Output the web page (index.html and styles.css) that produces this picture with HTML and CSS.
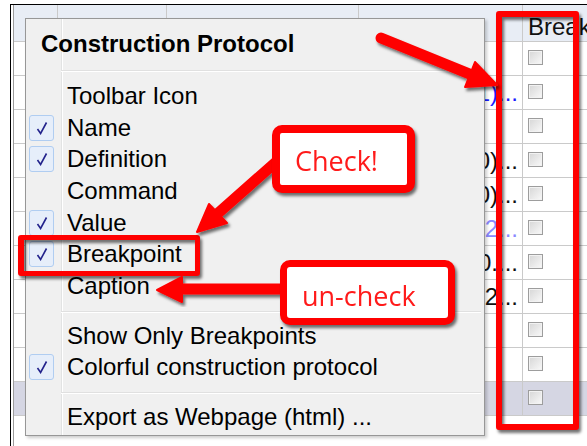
FILE: index.html
```html
<!DOCTYPE html>
<html lang="en">
  <head>
    <meta charset="UTF-8" />
    <title>Construction Protocol</title>
    <link rel="stylesheet" href="styles.css">
  </head>
  <body>
    <div class="shot">
      <!-- table behind the popup -->
      <div class="frame">
        <div class="table">
          <div class="row head">
            <div class="cell"></div>
            <div class="cell">Name</div>
            <div class="cell">Definition</div>
            <div class="cell">Value</div>
            <div class="cell">Breakpoint</div>
          </div>
          <div class="row">
            <div class="cell"></div><div class="cell"></div><div class="cell"></div>
            <div class="cell value"></div>
            <div class="cell"><span class="box"></span></div>
          </div>
          <div class="row">
            <div class="cell"></div><div class="cell"></div><div class="cell"></div>
            <div class="cell value blue">(1, 1)...</div>
            <div class="cell"><span class="box"></span></div>
          </div>
          <div class="row">
            <div class="cell"></div><div class="cell"></div><div class="cell"></div>
            <div class="cell value"></div>
            <div class="cell"><span class="box"></span></div>
          </div>
          <div class="row">
            <div class="cell"></div><div class="cell"></div><div class="cell"></div>
            <div class="cell value">(4, 0)...</div>
            <div class="cell"><span class="box"></span></div>
          </div>
          <div class="row">
            <div class="cell"></div><div class="cell"></div><div class="cell"></div>
            <div class="cell value">(2, 0)...</div>
            <div class="cell"><span class="box"></span></div>
          </div>
          <div class="row">
            <div class="cell"></div><div class="cell"></div><div class="cell"></div>
            <div class="cell value light">x + 2...</div>
            <div class="cell"><span class="box"></span></div>
          </div>
          <div class="row">
            <div class="cell"></div><div class="cell"></div><div class="cell"></div>
            <div class="cell value">y = 0....</div>
            <div class="cell"><span class="box"></span></div>
          </div>
          <div class="row">
            <div class="cell"></div><div class="cell"></div><div class="cell"></div>
            <div class="cell value">a = 2...</div>
            <div class="cell"><span class="box"></span></div>
          </div>
          <div class="row">
            <div class="cell"></div><div class="cell"></div><div class="cell"></div>
            <div class="cell value"></div>
            <div class="cell"><span class="box"></span></div>
          </div>
          <div class="row">
            <div class="cell"></div><div class="cell"></div><div class="cell"></div>
            <div class="cell value"></div>
            <div class="cell"><span class="box"></span></div>
          </div>
          <div class="row selected">
            <div class="cell"></div><div class="cell"></div><div class="cell"></div>
            <div class="cell value"></div>
            <div class="cell"><span class="box"></span></div>
          </div>
        </div>
      </div>

      <!-- popup menu -->
      <div class="menu">
        <div class="menu-title">Construction Protocol</div>
        <div class="menu-sep first"></div>
        <div class="item"><span class="tick"></span>Toolbar Icon</div>
        <div class="item"><span class="tick on"><svg width="12" height="14" viewBox="0 0 12 14"><path d="M1.5 8 L4.6 12.5 L10.5 1.5" /></svg></span>Name</div>
        <div class="item"><span class="tick on"><svg width="12" height="14" viewBox="0 0 12 14"><path d="M1.5 8 L4.6 12.5 L10.5 1.5" /></svg></span>Definition</div>
        <div class="item"><span class="tick"></span>Command</div>
        <div class="item"><span class="tick on"><svg width="12" height="14" viewBox="0 0 12 14"><path d="M1.5 8 L4.6 12.5 L10.5 1.5" /></svg></span>Value</div>
        <div class="item"><span class="tick on"><svg width="12" height="14" viewBox="0 0 12 14"><path d="M1.5 8 L4.6 12.5 L10.5 1.5" /></svg></span>Breakpoint</div>
        <div class="item"><span class="tick"></span>Caption</div>
        <div class="menu-sep"></div>
        <div class="item"><span class="tick"></span>Show Only Breakpoints</div>
        <div class="item"><span class="tick on"><svg width="12" height="14" viewBox="0 0 12 14"><path d="M1.5 8 L4.6 12.5 L10.5 1.5" /></svg></span>Colorful construction protocol</div>
        <div class="menu-sep"></div>
        <div class="item"><span class="tick"></span>Export as Webpage (html) ...</div>
      </div>

      <!-- annotations -->
      <div class="mark column-mark"></div>
      <div class="mark item-mark"></div>

      <svg class="arrows" width="587" height="446" viewBox="0 0 587 446">
        <defs>
          <filter id="shade" x="-20%" y="-20%" width="140%" height="140%">
            <feDropShadow dx="2" dy="3" stdDeviation="1.5" flood-color="#000" flood-opacity="0.55" />
          </filter>
        </defs>
        <g filter="url(#shade)">
          <line x1="381" y1="38" x2="472" y2="75" />
          <polygon points="497,85 465,87 475,62" />
        </g>
        <g filter="url(#shade)">
          <line x1="276" y1="162" x2="216" y2="215" />
          <polygon points="197,232 209,204 227,223" />
        </g>
        <g filter="url(#shade)">
          <line x1="292" y1="289" x2="178" y2="289" />
          <polygon points="157,290 182,277 182,302" />
        </g>
      </svg>

      <div class="callout check-note">Check!</div>
      <div class="callout uncheck-note">un-check</div>
    </div>
  </body>
</html>
```

FILE: styles.css
```css
body {
  margin: 0;
  background: #fff;
  font-family: "Liberation Sans", Arial, sans-serif;
}

.shot {
  position: relative;
  width: 587px;
  height: 446px;
  overflow: hidden;
  background: #fff;
}

/* table underneath */
.frame {
  margin: 4px 0 0 10px;
  height: 442px;
  box-sizing: border-box;
  border-left: 1px solid #000;
  border-top: 1px solid #000;
  padding-left: 2px;
}

.table {
  height: 100%;
  border-left: 1px solid #9c9c9c;
}

.row {
  display: grid;
  grid-template-columns: 44px 109px 192px 164px 80px;
  height: 34px;
}

.row.head {
  height: 37px;
  background: #e8edf5;
}

.row.selected {
  background: #d5d6e3;
}

.cell {
  box-sizing: border-box;
  border-right: 1px solid #cacaca;
  border-bottom: 1px solid #cacaca;
  padding: 0 4px;
  font-size: 24px;
  line-height: 33px;
  white-space: nowrap;
  overflow: hidden;
  color: #111;
}

.head .cell {
  padding-top: 5px;
  padding-left: 5px;
}

.value {
  text-align: right;
}

.value.blue {
  color: #1a1aff;
}

.value.light {
  color: #8a8aff;
}

.box {
  display: block;
  width: 15px;
  height: 15px;
  box-sizing: border-box;
  margin: 8px 0 0 1px;
  border: 1px solid #9d9d9d;
  background: linear-gradient(135deg, #d6d6d6, #f9f9f9);
  box-shadow: inset 0 0 0 1px #f2f2f2;
}

/* popup menu */
.menu {
  position: absolute;
  left: 25px;
  top: 18px;
  width: 460px;
  height: 418px;
  box-sizing: border-box;
  padding-top: 9px;
  border: 1px solid #979797;
  background: linear-gradient(to right, #f0f0f0 35px, #e2e3e3 35px, #e2e3e3 36px, #fff 36px, #fff 37px, #f0f0f0 37px);
  box-shadow: 2px 2px 3px rgba(0, 0, 0, 0.2);
  color: #000;
}

.menu-title {
  font-weight: bold;
  font-size: 24px;
  line-height: 32px;
  padding-left: 15px;
}

.menu-sep {
  margin: 9px 3px 7px 35px;
  border-top: 1px solid #e0e0e0;
  border-bottom: 1px solid #fff;
}

.menu-sep.first {
  margin: 10px 3px 8px 35px;
}

.item {
  display: flex;
  align-items: center;
  height: 31.7px;
  padding-left: 3px;
  font-size: 24px;
  white-space: nowrap;
}

.tick {
  display: flex;
  align-items: center;
  justify-content: center;
  width: 25px;
  height: 26px;
  box-sizing: border-box;
  margin-right: 13px;
}

.tick.on {
  border: 1px solid #b0cdf1;
  border-radius: 3px;
  background: #e6eefa;
}

.tick path {
  fill: none;
  stroke: #23238c;
  stroke-width: 1.6;
}

/* red annotations */
.mark {
  position: absolute;
  box-sizing: border-box;
  border: 6px solid #ff0000;
  border-radius: 3px;
  filter: drop-shadow(2px 3px 1.5px rgba(0, 0, 0, 0.55));
}

.column-mark {
  left: 496px;
  top: 11px;
  width: 83px;
  height: 419px;
}

.item-mark {
  left: 18px;
  top: 235px;
  width: 182px;
  height: 41px;
  border-width: 5px 5px 5px 6px;
}

.arrows {
  position: absolute;
  left: 0;
  top: 0;
  pointer-events: none;
}

.arrows line {
  stroke: #ff0000;
  stroke-width: 11;
  stroke-linecap: round;
}

.arrows polygon {
  fill: #ff0000;
  stroke: #ff0000;
  stroke-width: 2;
  stroke-linejoin: round;
}

.callout {
  position: absolute;
  box-sizing: border-box;
  background: #fff;
  border: 8px solid #ff0000;
  border-radius: 10px;
  padding-left: 15px;
  color: #ff1a1a;
  font-family: "Open Sans", sans-serif;
  font-size: 27px;
  line-height: 36px;
  filter: drop-shadow(2px 3px 1.5px rgba(0, 0, 0, 0.55));
}

.check-note {
  left: 272px;
  top: 125px;
  width: 143px;
  height: 68px;
  padding-top: 10px;
}

.uncheck-note {
  left: 280px;
  top: 260px;
  width: 175px;
  height: 65px;
  border-width: 7px;
  padding-top: 11px;
}
```
